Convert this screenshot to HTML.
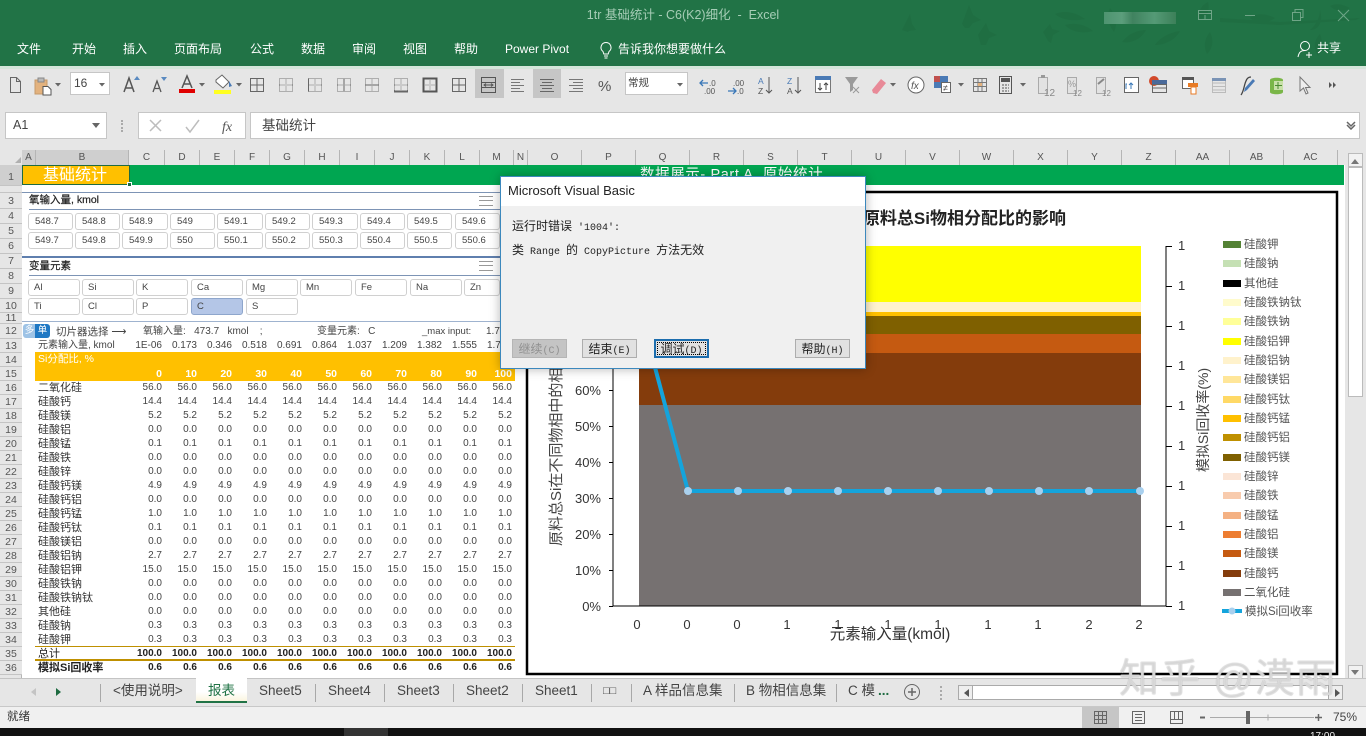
<!DOCTYPE html>
<html lang="zh"><head><meta charset="utf-8"><title>1tr 基础统计 - C6(K2)细化 - Excel</title>
<style>
*{box-sizing:border-box;margin:0;padding:0}
html,body{width:1366px;height:736px;overflow:hidden;background:#fff;font-family:"Liberation Sans","Noto Sans CJK SC",sans-serif;color:#333}
.a{position:absolute;white-space:nowrap}
.c{transform:translateX(-50%)}
.tab{position:absolute;top:41px;font-size:12px;color:#fff;line-height:16px;white-space:nowrap}
.ch{position:absolute;top:150px;height:15px;font-size:10px;line-height:15px;text-align:center;color:#555;border-right:1px solid #b5b5b5}
.rh{position:absolute;left:0;width:22px;text-align:center;font-size:10.5px;line-height:12px;color:#555;background:#e6e6e6;border-bottom:1px solid #c4c4c4}
.bt{position:absolute;background:#fff;border:1px solid #d0d0d0;border-radius:3px;font-size:9.5px;line-height:15px;padding-left:6px;color:#444;height:17px}
.bt2{padding-left:5px}
.r{position:absolute;left:38px;height:14px;line-height:14px;font-size:10px;display:flex;white-space:nowrap}
.r b{display:block;width:89px;font-weight:400;font-size:11px;color:#333}
.r i{display:block;width:35px;text-align:right;font-style:normal;color:#444}
.bold b,.bold i{font-weight:700;color:#222}
.st{position:absolute;top:682px;font-size:13.5px;line-height:18px;color:#444;white-space:nowrap}
.sp{position:absolute;top:684px;width:1px;height:18px;background:#a8a8a8}
.m{font-family:"Liberation Mono","Noto Sans CJK SC",monospace;font-size:10px;color:#222}
.m span{font-size:12px;font-family:"Noto Sans CJK SC",sans-serif}
.db{position:absolute;top:339px;height:19px;width:55px;background:#e1e1e1;border:1px solid #adadad;line-height:17px;text-align:center}
svg text{font-family:"Liberation Sans","Noto Sans CJK SC",sans-serif}
</style></head><body>

<!-- title bar -->
<div class="a" style="left:0;top:0;width:1366px;height:66px;background:#217346"></div>
<svg class="a" style="left:860px;top:0" width="506" height="66" fill="#1f6a40" opacity=".55">
<path d="M42 30l8-16 2 10 4 6-7 1-1 1z"/><path d="M102 24l7-19 4 10 8 5-8 3-4 5-4 0z"/>
<path d="M118 35l8-12 3 8 8 4-8 3-3 7-5 0z"/><path d="M183 32l7-8 2 5 8 2-7 4-2 8-3-2z"/>
<path d="M195 14c10-4 20-2 30 5-10 2-22 2-30-5zM205 25c10-3 22 0 28 6-10 3-22 1-28-6zM262 42c6-8 15-12 24-12-4 8-14 14-24 12zM295 45c4-6 12-12 25-14-4 8-14 14-25 14zM340 20c-2-8 0-14 8-18 2 8 0 14-8 18zM360 18l60 4 80-4-4 2-76 5-60-3zM390 18c6-5 15-5 25 0-8 6-18 6-25 0zM450 30c5-4 10-12 10-20 3 10 0 20-10 20zM460 34c3 8 3 16-2 22-5-8-4-16 2-22zM350 32c4 8 3 16-3 22-4-8-2-16 3-22zM250 8c6 8 8 16 4 24-6-8-8-16-4-24zM470 6c6-3 12-2 20 2-6 4-14 4-20-2z"/>
</svg>
<div class="a c" style="left:683px;top:7px;font-size:12.500px;line-height:16px;color:#a6cdb6">1tr 基础统计 - C6(K2)细化 &nbsp;-&nbsp; Excel</div>
<div class="a" style="left:1104px;top:12px;width:72px;height:12px;background:linear-gradient(90deg,#4e9470 0,#5c9e7c 25%,#40825f 40%,#559a76 70%,#3c8059 100%)"></div>
<svg class="a" style="left:1190px;top:0" width="176" height="30" fill="none" stroke="#6fa587" stroke-width="1">
<path d="M8.500 10.500h13v9h-13zM8.500 13.500h13M15 15v4"/><path d="M55 15.500h10"/>
<path d="M102.500 12.500h8v8h-8zM105 12.500v-3h8v8h-2.500"/><path d="M148 10l11 11M159 10l-11 11"/></svg>

<div class="tab" style="left:17px">文件</div><div class="tab" style="left:72px">开始</div><div class="tab" style="left:123px">插入</div><div class="tab" style="left:174px">页面布局</div><div class="tab" style="left:250px">公式</div><div class="tab" style="left:301px">数据</div><div class="tab" style="left:352px">审阅</div><div class="tab" style="left:403px">视图</div><div class="tab" style="left:454px">帮助</div><div class="tab" style="left:505px">Power Pivot</div><div class="tab" style="left:618px">告诉我你想要做什么</div>
<svg class="a" style="left:598px;top:41px" width="16" height="18" fill="none" stroke="#fff"><path d="M8 1.500a5 5 0 0 1 3 9l-.8 2.500h-4.400l-.8-2.500a5 5 0 0 1 3-9zM6 15h4M6.500 17h3"/></svg>
<svg class="a" style="left:1297px;top:40px" width="18" height="19" fill="none" stroke="#fff"><circle cx="8" cy="6" r="4.500"/><path d="M1 17c1-5 3-6.500 7-6.500M12 12v6M9 15h6"/></svg>
<div class="tab" style="left:1317px;top:40px">共享</div>

<!-- toolbar / formula area -->
<div class="a" style="left:0;top:66px;width:1366px;height:85px;background:#e6e6e6"></div>
<div class="a" style="left:0;top:66px;width:1366px;height:3px;background:#d4e6da"></div>
<div class="a" style="left:475px;top:69px;width:29px;height:29px;background:#c6c6c6"></div>
<div class="a" style="left:533px;top:69px;width:28px;height:29px;background:#c6c6c6"></div>
<div class="a" style="left:70px;top:72px;width:40px;height:23px;background:#fff;border:1px solid #c6c6c6;font-size:12px;line-height:21px;padding-left:3px;color:#444">16</div>
<div class="a" style="left:625px;top:72px;width:63px;height:23px;background:#fff;border:1px solid #c6c6c6;font-size:10.500px;line-height:21px;padding-left:2px;color:#444">常规</div>

<svg class="a" style="left:0;top:66px" width="1366" height="42" fill="none" stroke="#666">
<defs>
<g id="dg"><path d="M.500.500h13v13H.500zM7 .500v13M.500 7h13" stroke="#777" stroke-dasharray="1 1"/></g>
<path id="ar" d="M0 0h6l-3 3.500z" fill="#666" stroke="none"/>
</defs>
<path d="M10.500 11.500h6l4 4v11h-10zM16.500 11.500v4h4" stroke="#666"/>
<path d="M35 14h12v14H35z" fill="#e3b27e" stroke="#c59a6a"/><path d="M38 12h6v4h-6z" fill="#b9b9b9" stroke="#888"/><path d="M43 20.500h5l3 3v5.500h-8z" fill="#fff" stroke="#555"/>
<use href="#ar" x="55" y="17"/>
<use href="#ar" x="99" y="17"/>
<path d="M124 26l5-14 5 14M126 22h6" stroke="#555" stroke-width="1.500"/><path d="M134 14l3-4 3 4z" fill="#5a8ac0" stroke="none"/>
<path d="M153 26l4-11 4 11M155 22.500h4" stroke="#555" stroke-width="1.300"/><path d="M161 11h6l-3 4z" fill="#5a8ac0" stroke="none"/>
<path d="M182 22l5-12 5 12M184 18h6" stroke="#555" stroke-width="1.500"/><rect x="179" y="23" width="16" height="4" fill="#e00000" stroke="none"/>
<use href="#ar" x="199" y="17"/>
<path d="M216 14l6-5 7 7-6 6-7-6z" fill="#fff" stroke="#666"/><path d="M229 15l3 5-3 1z" fill="#4a7ab5" stroke="none"/><rect x="214" y="24" width="17" height="4" fill="#ffff20" stroke="none"/>
<use href="#ar" x="236" y="17"/>
<g stroke="#666"><path d="M250.500 12.500h13v13h-13zM257 12.500v13M250.500 19h13"/></g>
<use href="#dg" x="279" y="12"/><use href="#dg" x="308" y="12"/><path d="M308.500 12.500v13" stroke="#666"/>
<use href="#dg" x="337" y="12"/><path d="M344 12.500v13" stroke="#666"/>
<use href="#dg" x="365" y="12"/><path d="M365.500 19h13" stroke="#666"/>
<use href="#dg" x="394" y="12"/><path d="M394 25.500h14" stroke="#666" stroke-width="2"/>
<use href="#dg" x="423" y="12"/><path d="M423.500 12.500h13v13h-13z" stroke="#555" stroke-width="2"/>
<path d="M452.500 12.500h13v13h-13zM459 12.500v13M452.500 19h13" stroke="#666"/>
<path d="M481.500 11.500h14v15h-14zM481.500 16.500h14M481.500 21.500h14M484 19h9M491 17.500l2 1.500-2 1.500M486 17.500l-2 1.500 2 1.500" stroke="#555"/>
<path d="M511 13.500h13M511 16.500h9M511 19.500h13M511 22.500h9M511 25.500h13" stroke="#777"/>
<path d="M540 13.500h14M542 16.500h10M540 19.500h14M542 22.500h10M540 25.500h14" stroke="#666"/>
<path d="M569 13.500h14M573 16.500h10M569 19.500h14M573 22.500h10M569 25.500h14" stroke="#777"/>
<text x="598" y="25" font-size="15" fill="#555" stroke="none">%</text>
<use href="#ar" x="677" y="17"/>
<path d="M700 17h8M703 14l-3 3 3 3" stroke="#3a78b8" stroke-width="1.300"/><text x="709" y="20" font-size="8" fill="#555" stroke="none">.0</text><text x="704" y="28" font-size="8" fill="#555" stroke="none">.00</text>
<text x="733" y="20" font-size="8" fill="#555" stroke="none">.00</text><path d="M728 25h8M733 22l3 3-3 3" stroke="#3a78b8" stroke-width="1.300"/><text x="737" y="28" font-size="8" fill="#555" stroke="none">.0</text>
<text x="758" y="18" font-size="8.500" fill="#4a7ab5" stroke="none">A</text><text x="758" y="28" font-size="8.500" fill="#555" stroke="none">Z</text><path d="M769 11v16M766 24l3 3 3-3" stroke="#555"/>
<text x="787" y="18" font-size="8.500" fill="#4a7ab5" stroke="none">Z</text><text x="787" y="28" font-size="8.500" fill="#555" stroke="none">A</text><path d="M798 11v16M795 24l3 3 3-3" stroke="#555"/>
<path d="M815.500 10.500h15v16h-15z" fill="#fff" stroke="#777"/><rect x="815" y="10" width="16" height="4" fill="#4a7ab5" stroke="none"/><path d="M820 17v7M818 22l2 2 2-2M826 24v-7M824 19l2-2 2 2" stroke="#444"/>
<path d="M845 11h13l-5 7v6l-3 2v-8z" fill="#9a9a9a" stroke="none"/><path d="M853 21l6 6M859 21l-6 6" stroke="#999"/>
<path d="M872 24l9-11 5 4-9 11-4-1z" fill="#e88a98" stroke="none"/>
<use href="#ar" x="890" y="17"/>
<circle cx="916" cy="19" r="8" stroke="#666" fill="#fff"/><text x="911" y="23" font-size="10" font-style="italic" fill="#555" stroke="none">fx</text>
<rect x="934" y="10" width="14" height="12" fill="#4a7ab5" stroke="none"/><rect x="934" y="10" width="6" height="6" fill="#c0504d" stroke="none"/><path d="M941.500 16.500h9v10h-9z" fill="#fff" stroke="#666"/><text x="943" y="25" font-size="9" fill="#444" stroke="none">≠</text>
<use href="#ar" x="958" y="17"/>
<path d="M973.500 12.500h13v13h-13zM973.500 16.500h13M973.500 20.500h13M978 12.500v13M982 12.500v13" stroke="#777"/><rect x="978" y="17" width="4" height="3" fill="#e3b27e" stroke="none"/>
<path d="M999.500 10.500h12v17h-12z" stroke="#555"/><rect x="1001" y="12" width="9" height="4" fill="#555" stroke="none"/><path d="M1002 19h7M1002 22h7M1002 25h7" stroke="#555" stroke-dasharray="2 1"/>
<use href="#ar" x="1020" y="17"/>
<path d="M1038.500 11.500h9v16h-9z" fill="#e2e2e2" stroke="#aaa"/><rect x="1041" y="9" width="4" height="3" fill="#999" stroke="none"/><text x="1044" y="30" font-size="10" fill="#888" stroke="none">12</text>
<path d="M1067.500 11.500h9v16h-9z" fill="#e2e2e2" stroke="#aaa"/><text x="1068" y="21" font-size="9" fill="#999" stroke="none">%</text><text x="1073" y="30" font-size="8" fill="#888" stroke="none">12</text>
<path d="M1096.500 11.500h9v16h-9z" fill="#e2e2e2" stroke="#aaa"/><path d="M1098 18l6-5" stroke="#888" stroke-width="2"/><text x="1102" y="30" font-size="8" fill="#888" stroke="none">12</text>
<path d="M1124.500 11.500h14v15h-14z" fill="#fff" stroke="#666"/><path d="M1131 23v-6M1129 19l2-2 2 2M1127 18h-1v5" stroke="#3a78b8"/>
<circle cx="1154" cy="15" r="5" fill="#d2492a" stroke="none"/><rect x="1152" y="14" width="15" height="4" fill="#4a6a9a" stroke="none"/><path d="M1152.500 18.500h14v8h-14zM1152.500 22h14" stroke="#666"/>
<path d="M1182.500 11.500h11v11h-11z" fill="#fff" stroke="#666"/><rect x="1182" y="11" width="12" height="3" fill="#555" stroke="none"/><rect x="1188" y="17" width="10" height="4" fill="#e87b25" stroke="none"/><rect x="1191" y="21" width="5" height="7" fill="#fff" stroke="#e87b25"/>
<path d="M1212.500 12.500h13v14h-13zM1212.500 17h13M1212.500 20.500h13M1212.500 24h13" stroke="#bbb"/><rect x="1212" y="12" width="14" height="3" fill="#7a93b5" stroke="none"/>
<path d="M1241 29c3-4 3-10 5-14 1-3 3-4 5-4" stroke="#444" stroke-width="1.300"/><path d="M1245 22l8-9 2 2-8 9-3 2z" fill="#4a7ab5" stroke="none"/>
<path d="M1270 14c0-3 13-3 13 0v12c0 3-13 3-13 0z" fill="#7ab648" stroke="none"/><rect x="1274" y="15" width="9" height="9" fill="#c8e0a8" stroke="none"/><path d="M1278 16v7M1275 19.500h7" stroke="#4a8a30"/>
<path d="M1300 11v14l3.500-3 2.500 6 2-1-2.500-5.500h4.500z" fill="#eee" stroke="#777"/>
<path d="M1329 16v6l3-3zM1333 16v6l3-3z" fill="#555" stroke="none"/>
</svg>

<div class="a" style="left:5px;top:112px;width:102px;height:27px;background:#fff;border:1px solid #c6c6c6;font-size:12.5px;line-height:25px;padding-left:7px;color:#444">A1</div>
<div class="a" style="left:92px;top:123px;border:4px solid transparent;border-top:5px solid #666"></div>
<div class="a" style="left:121px;top:120px;width:2px;height:12px;border-left:2px dotted #aaa"></div>
<div class="a" style="left:138px;top:112px;width:108px;height:27px;background:#fff;border:1px solid #c6c6c6"></div>
<svg class="a" style="left:145px;top:116px" width="100" height="20" fill="none" stroke="#bdbdbd" stroke-width="1.500"><path d="M5 4l11 11M16 4l-11 11"/><path d="M41 11l4 5 9-12"/><text x="77" y="15" font-size="14" font-style="italic" fill="#555" stroke="none" style="font-family:'Liberation Serif',serif">fx</text></svg>
<div class="a" style="left:250px;top:112px;width:1110px;height:27px;background:#fff;border:1px solid #c6c6c6;font-size:13.5px;line-height:25px;padding-left:11px;color:#444">基础统计</div>
<svg class="a" style="left:1345px;top:120px" width="12" height="10" fill="none" stroke="#666" stroke-width="1.500"><path d="M2 2l4 4 4-4M2 5l4 4 4-4"/></svg>

<!-- column headers -->
<div class="a" style="left:0;top:150px;width:1366px;height:15px;background:#e6e6e6"></div>
<div class="a" style="left:22px;top:150px;width:107px;height:15px;background:#cfcfcf"></div>
<div class="a" style="left:15px;top:157px;border:3px solid transparent;border-right-color:#b0b0b0;border-bottom-color:#b0b0b0"></div>
<div class="ch" style="left:22px;width:14px">A</div><div class="ch" style="left:36px;width:93px">B</div><div class="ch" style="left:129px;width:36px">C</div><div class="ch" style="left:165px;width:35px">D</div><div class="ch" style="left:200px;width:35px">E</div><div class="ch" style="left:235px;width:35px">F</div><div class="ch" style="left:270px;width:35px">G</div><div class="ch" style="left:305px;width:35px">H</div><div class="ch" style="left:340px;width:35px">I</div><div class="ch" style="left:375px;width:35px">J</div><div class="ch" style="left:410px;width:35px">K</div><div class="ch" style="left:445px;width:35px">L</div><div class="ch" style="left:480px;width:34px">M</div><div class="ch" style="left:514px;width:14px">N</div><div class="ch" style="left:528px;width:54px">O</div><div class="ch" style="left:582px;width:54px">P</div><div class="ch" style="left:636px;width:54px">Q</div><div class="ch" style="left:690px;width:54px">R</div><div class="ch" style="left:744px;width:54px">S</div><div class="ch" style="left:798px;width:54px">T</div><div class="ch" style="left:852px;width:54px">U</div><div class="ch" style="left:906px;width:54px">V</div><div class="ch" style="left:960px;width:54px">W</div><div class="ch" style="left:1014px;width:54px">X</div><div class="ch" style="left:1068px;width:54px">Y</div><div class="ch" style="left:1122px;width:54px">Z</div><div class="ch" style="left:1176px;width:54px">AA</div><div class="ch" style="left:1230px;width:54px">AB</div><div class="ch" style="left:1284px;width:54px">AC</div>

<!-- row headers -->
<div class="a" style="left:0;top:165px;width:22px;height:515px;background:#e6e6e6;border-right:1px solid #b5b5b5"></div>
<div class="rh" style="top:165px;height:21px;line-height:24px;background:#cfcfcf">1</div>
<div class="rh" style="top:186px;height:7px"></div>
<div class="rh" style="top:193px;height:16px;line-height:16px">3</div><div class="rh" style="top:209px;height:15px;line-height:15px">4</div><div class="rh" style="top:224px;height:15px;line-height:15px">5</div><div class="rh" style="top:239px;height:15px;line-height:15px">6</div><div class="rh" style="top:254px;height:15px;line-height:15px">7</div><div class="rh" style="top:269px;height:15px;line-height:15px">8</div><div class="rh" style="top:284px;height:15px;line-height:15px">9</div><div class="rh" style="top:299px;height:14px;line-height:14px">10</div><div class="rh" style="top:313px;height:11px;line-height:11px">11</div><div class="rh" style="top:324px;height:15px;line-height:15px">12</div><div class="rh" style="top:339px;height:14px;line-height:14px">13</div>
<div class="rh" style="top:353px;height:14px;line-height:14px">14</div><div class="rh" style="top:367px;height:14px;line-height:14px">15</div><div class="rh" style="top:381px;height:14px;line-height:14px">16</div><div class="rh" style="top:395px;height:14px;line-height:14px">17</div><div class="rh" style="top:409px;height:14px;line-height:14px">18</div><div class="rh" style="top:423px;height:14px;line-height:14px">19</div><div class="rh" style="top:437px;height:14px;line-height:14px">20</div><div class="rh" style="top:451px;height:14px;line-height:14px">21</div><div class="rh" style="top:465px;height:14px;line-height:14px">22</div><div class="rh" style="top:479px;height:14px;line-height:14px">23</div><div class="rh" style="top:493px;height:14px;line-height:14px">24</div><div class="rh" style="top:507px;height:14px;line-height:14px">25</div><div class="rh" style="top:521px;height:14px;line-height:14px">26</div><div class="rh" style="top:535px;height:14px;line-height:14px">27</div><div class="rh" style="top:549px;height:14px;line-height:14px">28</div><div class="rh" style="top:563px;height:14px;line-height:14px">29</div><div class="rh" style="top:577px;height:14px;line-height:14px">30</div><div class="rh" style="top:591px;height:14px;line-height:14px">31</div><div class="rh" style="top:605px;height:14px;line-height:14px">32</div><div class="rh" style="top:619px;height:14px;line-height:14px">33</div><div class="rh" style="top:633px;height:14px;line-height:14px">34</div><div class="rh" style="top:647px;height:14px;line-height:14px">35</div><div class="rh" style="top:661px;height:14px;line-height:14px">36</div>

<!-- row 1 -->
<div class="a" style="left:129px;top:165px;width:1215px;height:20px;background:#00a651"></div>
<div class="a" style="left:640px;top:166px;height:18px;font-size:14.500px;line-height:18px;color:#fff;letter-spacing:.6px">数据展示- Part A. 原始统计</div>
<div class="a" style="left:22px;top:165px;width:108px;height:20px;background:#ffc000;border:1.500px solid #1e6b41;color:#fff;font-size:16px;line-height:20px;padding-left:20px">基础统计</div>
<div class="a" style="left:127px;top:182px;width:5px;height:5px;background:#1e6b41;border:1px solid #fff"></div>

<!-- slicer 1 -->
<div class="a" style="left:22px;top:192px;width:478px;height:1px;background:#7d94b5"></div>
<div class="a" style="left:29px;top:192px;font-size:10.500px;line-height:17px;color:#222;-webkit-text-stroke:.2px #222">氧输入量, kmol</div>
<div class="a" style="left:29px;top:209px;width:471px;height:1px;background:#7d94b5"></div>
<div class="a" style="left:479px;top:196px;width:14px;height:10px;border-top:1px solid #999;border-bottom:1px solid #999"></div><div class="a" style="left:479px;top:200px;width:14px;height:2px;border-top:1px solid #999"></div>
<div class="bt" style="left:28px;top:213px;width:45px">548.7</div><div class="bt" style="left:75px;top:213px;width:45px">548.8</div><div class="bt" style="left:122px;top:213px;width:46px">548.9</div><div class="bt" style="left:170px;top:213px;width:45px">549</div><div class="bt" style="left:217px;top:213px;width:46px">549.1</div><div class="bt" style="left:265px;top:213px;width:45px">549.2</div><div class="bt" style="left:312px;top:213px;width:46px">549.3</div><div class="bt" style="left:360px;top:213px;width:45px">549.4</div><div class="bt" style="left:407px;top:213px;width:45px">549.5</div><div class="bt" style="left:455px;top:213px;width:45px">549.6</div>
<div class="bt" style="left:28px;top:232px;width:45px">549.7</div><div class="bt" style="left:75px;top:232px;width:45px">549.8</div><div class="bt" style="left:122px;top:232px;width:46px">549.9</div><div class="bt" style="left:170px;top:232px;width:45px">550</div><div class="bt" style="left:217px;top:232px;width:46px">550.1</div><div class="bt" style="left:265px;top:232px;width:45px">550.2</div><div class="bt" style="left:312px;top:232px;width:46px">550.3</div><div class="bt" style="left:360px;top:232px;width:45px">550.4</div><div class="bt" style="left:407px;top:232px;width:45px">550.5</div><div class="bt" style="left:455px;top:232px;width:45px">550.6</div>

<!-- slicer 2 -->
<div class="a" style="left:22px;top:256px;width:478px;height:2px;background:#5f7fae"></div>
<div class="a" style="left:29px;top:258px;font-size:10.500px;line-height:17px;color:#222;-webkit-text-stroke:.2px #222">变量元素</div>
<div class="a" style="left:29px;top:275px;width:471px;height:1px;background:#7d94b5"></div>
<div class="a" style="left:479px;top:261px;width:14px;height:10px;border-top:1px solid #999;border-bottom:1px solid #999"></div><div class="a" style="left:479px;top:265px;width:14px;height:2px;border-top:1px solid #999"></div>
<div class="bt bt2" style="left:28px;top:279px;width:52px">Al</div><div class="bt bt2" style="left:82px;top:279px;width:52px">Si</div><div class="bt bt2" style="left:136px;top:279px;width:52px">K</div><div class="bt bt2" style="left:191px;top:279px;width:52px">Ca</div><div class="bt bt2" style="left:246px;top:279px;width:52px">Mg</div><div class="bt bt2" style="left:300px;top:279px;width:52px">Mn</div><div class="bt bt2" style="left:355px;top:279px;width:52px">Fe</div><div class="bt bt2" style="left:410px;top:279px;width:52px">Na</div><div class="bt bt2" style="left:464px;top:279px;width:36px">Zn</div>
<div class="bt bt2" style="left:28px;top:298px;width:52px">Ti</div><div class="bt bt2" style="left:82px;top:298px;width:52px">Cl</div><div class="bt bt2" style="left:136px;top:298px;width:52px">P</div><div class="bt bt2" style="left:191px;top:298px;width:52px;background:#b4c6e7;border-color:#8ea6cc">C</div><div class="bt bt2" style="left:246px;top:298px;width:52px">S</div>
<div class="a" style="left:22px;top:321px;width:478px;height:1px;background:#9fb3cf"></div>

<!-- row 12-13 -->
<div class="a" style="left:23px;top:324px;width:13px;height:14px;background:#9ec3e6;color:#fff;font-size:9.500px;line-height:14px;text-align:center;border-radius:3px 0 0 3px">多</div>
<div class="a" style="left:35px;top:324px;width:15px;height:14px;background:#1f78c4;color:#fff;font-size:9.500px;line-height:14px;text-align:center;border-radius:0 3px 3px 0">单</div>
<div class="a" style="left:56px;top:325px;font-size:10.500px;line-height:14px;color:#444">切片器选择 ⟶</div>
<div class="a" style="left:143px;top:325px;font-size:10px;line-height:14px;color:#444">氧输入量: &nbsp;&nbsp;473.7 &nbsp;&nbsp;kmol &nbsp;&nbsp;&nbsp;;</div>
<div class="a" style="left:317px;top:325px;font-size:10px;line-height:14px;color:#444">变量元素: &nbsp;&nbsp;C</div>
<div class="a" style="left:422px;top:325px;font-size:9.500px;line-height:14px;color:#444">_max input:</div>
<div class="a" style="left:486px;top:325px;font-size:10px;line-height:14px;color:#444">1.727</div>
<div class="a" style="left:38px;top:339px;font-size:10px;line-height:14px;color:#444">元素输入量, kmol</div>
<div class="r" style="left:127px;top:339px"><i>1E-06</i><i>0.173</i><i>0.346</i><i>0.518</i><i>0.691</i><i>0.864</i><i>1.037</i><i>1.209</i><i>1.382</i><i>1.555</i><i>1.727</i></div>

<!-- table -->
<div class="a" style="left:35px;top:352px;width:480px;height:29px;background:#ffc000"></div>
<div class="a" style="left:38px;top:352px;font-size:10.500px;line-height:15px;color:#fff">Si分配比, %</div>
<div class="r" style="left:127px;top:367px;font-weight:700;font-size:10.500px"><i style="color:#fff">0</i><i style="color:#fff">10</i><i style="color:#fff">20</i><i style="color:#fff">30</i><i style="color:#fff">40</i><i style="color:#fff">50</i><i style="color:#fff">60</i><i style="color:#fff">70</i><i style="color:#fff">80</i><i style="color:#fff">90</i><i style="color:#fff">100</i></div>

<div class="r" style="top:381px"><b>二氧化硅</b><i>56.0</i><i>56.0</i><i>56.0</i><i>56.0</i><i>56.0</i><i>56.0</i><i>56.0</i><i>56.0</i><i>56.0</i><i>56.0</i><i>56.0</i></div>
<div class="r" style="top:395px"><b>硅酸钙</b><i>14.4</i><i>14.4</i><i>14.4</i><i>14.4</i><i>14.4</i><i>14.4</i><i>14.4</i><i>14.4</i><i>14.4</i><i>14.4</i><i>14.4</i></div>
<div class="r" style="top:409px"><b>硅酸镁</b><i>5.2</i><i>5.2</i><i>5.2</i><i>5.2</i><i>5.2</i><i>5.2</i><i>5.2</i><i>5.2</i><i>5.2</i><i>5.2</i><i>5.2</i></div>
<div class="r" style="top:423px"><b>硅酸铝</b><i>0.0</i><i>0.0</i><i>0.0</i><i>0.0</i><i>0.0</i><i>0.0</i><i>0.0</i><i>0.0</i><i>0.0</i><i>0.0</i><i>0.0</i></div>
<div class="r" style="top:437px"><b>硅酸锰</b><i>0.1</i><i>0.1</i><i>0.1</i><i>0.1</i><i>0.1</i><i>0.1</i><i>0.1</i><i>0.1</i><i>0.1</i><i>0.1</i><i>0.1</i></div>
<div class="r" style="top:451px"><b>硅酸铁</b><i>0.0</i><i>0.0</i><i>0.0</i><i>0.0</i><i>0.0</i><i>0.0</i><i>0.0</i><i>0.0</i><i>0.0</i><i>0.0</i><i>0.0</i></div>
<div class="r" style="top:465px"><b>硅酸锌</b><i>0.0</i><i>0.0</i><i>0.0</i><i>0.0</i><i>0.0</i><i>0.0</i><i>0.0</i><i>0.0</i><i>0.0</i><i>0.0</i><i>0.0</i></div>
<div class="r" style="top:479px"><b>硅酸钙镁</b><i>4.9</i><i>4.9</i><i>4.9</i><i>4.9</i><i>4.9</i><i>4.9</i><i>4.9</i><i>4.9</i><i>4.9</i><i>4.9</i><i>4.9</i></div>
<div class="r" style="top:493px"><b>硅酸钙铝</b><i>0.0</i><i>0.0</i><i>0.0</i><i>0.0</i><i>0.0</i><i>0.0</i><i>0.0</i><i>0.0</i><i>0.0</i><i>0.0</i><i>0.0</i></div>
<div class="r" style="top:507px"><b>硅酸钙锰</b><i>1.0</i><i>1.0</i><i>1.0</i><i>1.0</i><i>1.0</i><i>1.0</i><i>1.0</i><i>1.0</i><i>1.0</i><i>1.0</i><i>1.0</i></div>
<div class="r" style="top:521px"><b>硅酸钙钛</b><i>0.1</i><i>0.1</i><i>0.1</i><i>0.1</i><i>0.1</i><i>0.1</i><i>0.1</i><i>0.1</i><i>0.1</i><i>0.1</i><i>0.1</i></div>
<div class="r" style="top:535px"><b>硅酸镁铝</b><i>0.0</i><i>0.0</i><i>0.0</i><i>0.0</i><i>0.0</i><i>0.0</i><i>0.0</i><i>0.0</i><i>0.0</i><i>0.0</i><i>0.0</i></div>
<div class="r" style="top:549px"><b>硅酸铝钠</b><i>2.7</i><i>2.7</i><i>2.7</i><i>2.7</i><i>2.7</i><i>2.7</i><i>2.7</i><i>2.7</i><i>2.7</i><i>2.7</i><i>2.7</i></div>
<div class="r" style="top:563px"><b>硅酸铝钾</b><i>15.0</i><i>15.0</i><i>15.0</i><i>15.0</i><i>15.0</i><i>15.0</i><i>15.0</i><i>15.0</i><i>15.0</i><i>15.0</i><i>15.0</i></div>
<div class="r" style="top:577px"><b>硅酸铁钠</b><i>0.0</i><i>0.0</i><i>0.0</i><i>0.0</i><i>0.0</i><i>0.0</i><i>0.0</i><i>0.0</i><i>0.0</i><i>0.0</i><i>0.0</i></div>
<div class="r" style="top:591px"><b>硅酸铁钠钛</b><i>0.0</i><i>0.0</i><i>0.0</i><i>0.0</i><i>0.0</i><i>0.0</i><i>0.0</i><i>0.0</i><i>0.0</i><i>0.0</i><i>0.0</i></div>
<div class="r" style="top:605px"><b>其他硅</b><i>0.0</i><i>0.0</i><i>0.0</i><i>0.0</i><i>0.0</i><i>0.0</i><i>0.0</i><i>0.0</i><i>0.0</i><i>0.0</i><i>0.0</i></div>
<div class="r" style="top:619px"><b>硅酸钠</b><i>0.3</i><i>0.3</i><i>0.3</i><i>0.3</i><i>0.3</i><i>0.3</i><i>0.3</i><i>0.3</i><i>0.3</i><i>0.3</i><i>0.3</i></div>
<div class="r" style="top:633px"><b>硅酸钾</b><i>0.3</i><i>0.3</i><i>0.3</i><i>0.3</i><i>0.3</i><i>0.3</i><i>0.3</i><i>0.3</i><i>0.3</i><i>0.3</i><i>0.3</i></div>
<div class="a" style="left:35px;top:646px;width:480px;height:1px;background:#bf9000"></div>
<div class="r" style="top:647px"><b style="color:#222">总计</b><i style="color:#222;font-weight:700">100.0</i><i style="color:#222;font-weight:700">100.0</i><i style="color:#222;font-weight:700">100.0</i><i style="color:#222;font-weight:700">100.0</i><i style="color:#222;font-weight:700">100.0</i><i style="color:#222;font-weight:700">100.0</i><i style="color:#222;font-weight:700">100.0</i><i style="color:#222;font-weight:700">100.0</i><i style="color:#222;font-weight:700">100.0</i><i style="color:#222;font-weight:700">100.0</i><i style="color:#222;font-weight:700">100.0</i></div>
<div class="a" style="left:35px;top:659px;width:480px;height:2px;background:#bf9000"></div>
<div class="r bold" style="top:661px"><b>模拟Si回收率</b><i>0.6</i><i>0.6</i><i>0.6</i><i>0.6</i><i>0.6</i><i>0.6</i><i>0.6</i><i>0.6</i><i>0.6</i><i>0.6</i><i>0.6</i></div>

<!-- chart -->
<svg class="a" style="left:0;top:0" width="1366" height="736" fill="none">
<rect x="527" y="192" width="810" height="482" fill="#fff" stroke="#000" stroke-width="2.500"/>
<text x="1066" y="224" text-anchor="end" font-size="17" font-weight="700" fill="#222">原料总Si物相分配比的影响</text>
<rect x="639" y="246" width="502" height="56" fill="#ffff00"/>
<rect x="639" y="302" width="502" height="10" fill="#fff2cc"/>
<rect x="639" y="312" width="502" height="4" fill="#ffc000"/>
<rect x="639" y="316" width="502" height="18" fill="#7f6000"/>
<rect x="639" y="334" width="502" height="19" fill="#c55a11"/>
<rect x="639" y="353" width="502" height="52" fill="#843c0c"/>
<rect x="639" y="405" width="502" height="201" fill="#767171"/>
<path d="M613 360v246h553M1166 246v360" stroke="#000"/>
<path d="M609 606.500h4M609 570.500h4M609 534.500h4M609 498.500h4M609 462.500h4M609 426.500h4M609 390.500h4" stroke="#000"/>
<path d="M1166 246.500h6M1166 286.500h6M1166 326.500h6M1166 366.500h6M1166 406.500h6M1166 446.500h6M1166 486.500h6M1166 526.500h6M1166 566.500h6M1166 606.500h6" stroke="#000"/>
<g font-size="13" fill="#333" text-anchor="end"><text x="601" y="611">0%</text><text x="601" y="575">10%</text><text x="601" y="539">20%</text><text x="601" y="503">30%</text><text x="601" y="467">40%</text><text x="601" y="431">50%</text><text x="601" y="395">60%</text></g>
<g font-size="13" fill="#333"><text x="1178" y="250">1</text><text x="1178" y="290">1</text><text x="1178" y="330">1</text><text x="1178" y="370">1</text><text x="1178" y="410">1</text><text x="1178" y="450">1</text><text x="1178" y="490">1</text><text x="1178" y="530">1</text><text x="1178" y="570">1</text><text x="1178" y="610">1</text></g>
<g font-size="13" fill="#333" text-anchor="middle"><text x="637" y="629">0</text><text x="687" y="629">0</text><text x="737" y="629">0</text><text x="787" y="629">1</text><text x="838" y="629">1</text><text x="888" y="629">1</text><text x="938" y="629">1</text><text x="988" y="629">1</text><text x="1038" y="629">1</text><text x="1089" y="629">2</text><text x="1139" y="629">2</text></g>
<text x="890" y="639" font-size="15.500" fill="#333" text-anchor="middle">元素输入量(kmol)</text>
<text transform="translate(561 546) rotate(-90)" font-size="15" fill="#444">原料总Si在不同物相中的相对含量(%)</text>
<text transform="translate(1208 420) rotate(-90)" font-size="14" fill="#444" text-anchor="middle">模拟Si回收率(%)</text>
<path d="M637 300L688 491H1140" stroke="#14a4dc" stroke-width="4"/>
<g fill="#a9d0ee"><circle cx="688" cy="491" r="4"/><circle cx="738" cy="491" r="4"/><circle cx="788" cy="491" r="4"/><circle cx="838" cy="491" r="4"/><circle cx="888" cy="491" r="4"/><circle cx="938" cy="491" r="4"/><circle cx="989" cy="491" r="4"/><circle cx="1039" cy="491" r="4"/><circle cx="1089" cy="491" r="4"/><circle cx="1140" cy="491" r="4"/></g>
<g stroke="none">
<rect x="1223" y="241" width="18" height="7" fill="#548235"/><rect x="1223" y="260" width="18" height="7" fill="#c5e0b4"/><rect x="1223" y="280" width="18" height="7" fill="#000"/><rect x="1223" y="299" width="18" height="7" fill="#fffbcc"/><rect x="1223" y="318" width="18" height="7" fill="#ffff99"/><rect x="1223" y="338" width="18" height="7" fill="#ffff00"/><rect x="1223" y="357" width="18" height="7" fill="#fff2cc"/><rect x="1223" y="376" width="18" height="7" fill="#ffe699"/><rect x="1223" y="396" width="18" height="7" fill="#ffd966"/><rect x="1223" y="415" width="18" height="7" fill="#ffc000"/><rect x="1223" y="434" width="18" height="7" fill="#bf9000"/><rect x="1223" y="454" width="18" height="7" fill="#7f6000"/><rect x="1223" y="473" width="18" height="7" fill="#fbe5d6"/><rect x="1223" y="492" width="18" height="7" fill="#f8cbad"/><rect x="1223" y="512" width="18" height="7" fill="#f4b183"/><rect x="1223" y="531" width="18" height="7" fill="#ed7d31"/><rect x="1223" y="550" width="18" height="7" fill="#c55a11"/><rect x="1223" y="570" width="18" height="7" fill="#843c0c"/><rect x="1223" y="589" width="18" height="7" fill="#767171"/>
</g>
<path d="M1222 611h20" stroke="#14a4dc" stroke-width="4"/><circle cx="1232" cy="611" r="3.500" fill="#a9d0ee"/>
<g font-size="11.500" fill="#555"><text x="1244" y="248">硅酸钾</text><text x="1244" y="267">硅酸钠</text><text x="1244" y="287">其他硅</text><text x="1244" y="306">硅酸铁钠钛</text><text x="1244" y="325">硅酸铁钠</text><text x="1244" y="345">硅酸铝钾</text><text x="1244" y="364">硅酸铝钠</text><text x="1244" y="383">硅酸镁铝</text><text x="1244" y="403">硅酸钙钛</text><text x="1244" y="422">硅酸钙锰</text><text x="1244" y="441">硅酸钙铝</text><text x="1244" y="461">硅酸钙镁</text><text x="1244" y="480">硅酸锌</text><text x="1244" y="499">硅酸铁</text><text x="1244" y="519">硅酸锰</text><text x="1244" y="538">硅酸铝</text><text x="1244" y="557">硅酸镁</text><text x="1244" y="577">硅酸钙</text><text x="1244" y="596">二氧化硅</text><text x="1245" y="615">模拟Si回收率</text></g>
</svg>

<!-- right scrollbar -->
<div class="a" style="left:1345px;top:150px;width:21px;height:530px;background:#e6e6e6"></div>
<div class="a" style="left:1348px;top:153px;width:15px;height:14px;background:#f2f2f2;border:1px solid #bbb"></div>
<div class="a" style="left:1351px;top:155px;border:4px solid transparent;border-bottom:5px solid #777"></div>
<div class="a" style="left:1348px;top:167px;width:15px;height:230px;background:#fff;border:1px solid #bbb"></div>
<div class="a" style="left:1348px;top:665px;width:15px;height:14px;background:#f2f2f2;border:1px solid #bbb"></div>
<div class="a" style="left:1351px;top:670px;border:4px solid transparent;border-top:5px solid #777"></div>

<!-- sheet tabs -->
<div class="a" style="left:0;top:678px;width:1366px;height:29px;background:#e6e6e6;border-top:1px solid #c4c4c4;border-bottom:1px solid #c8c8c8"></div>
<div class="a" style="left:27px;top:688px;border:4px solid transparent;border-right:5px solid #c4c4c4"></div>
<div class="a" style="left:56px;top:688px;border:4px solid transparent;border-left:5px solid #1e6b41"></div>
<div class="sp" style="left:100px"></div><div class="sp" style="left:315px"></div><div class="sp" style="left:384px"></div><div class="sp" style="left:453px"></div><div class="sp" style="left:522px"></div><div class="sp" style="left:591px"></div><div class="sp" style="left:631px"></div><div class="sp" style="left:734px"></div><div class="sp" style="left:836px"></div>
<div class="a" style="left:196px;top:678px;width:51px;height:25px;background:linear-gradient(#fff 60%,#fbf5df);border-bottom:2px solid #217346"></div>
<div class="st" style="left:113px">&lt;使用说明&gt;</div>
<div class="st" style="left:208px;color:#217346">报表</div>
<div class="st" style="left:259px">Sheet5</div><div class="st" style="left:328px">Sheet4</div><div class="st" style="left:397px">Sheet3</div><div class="st" style="left:466px">Sheet2</div><div class="st" style="left:535px">Sheet1</div>
<div class="st" style="left:603px;font-size:11px">□□</div>
<div class="st" style="left:643px">A 样品信息集</div><div class="st" style="left:746px">B 物相信息集</div><div class="st" style="left:848px">C 模</div>
<div class="st" style="left:878px;color:#1e6b41;font-weight:700">...</div>
<svg class="a" style="left:903px;top:683px" width="18" height="18" fill="none" stroke="#666"><circle cx="9" cy="9" r="7.500"/><path d="M9 5v8M5 9h8" stroke-width="1.500"/></svg>
<div class="a" style="left:940px;top:686px;width:2px;height:14px;border-left:2px dotted #aaa"></div>
<div class="a" style="left:958px;top:685px;width:385px;height:15px;background:#fff;border:1px solid #aaa"></div>
<div class="a" style="left:958px;top:685px;width:15px;height:15px;background:#eee;border:1px solid #aaa"></div>
<div class="a" style="left:1328px;top:685px;width:15px;height:15px;background:#eee;border:1px solid #aaa"></div>
<div class="a" style="left:960px;top:689px;border:4px solid transparent;border-right:5px solid #555"></div>
<div class="a" style="left:1335px;top:689px;border:4px solid transparent;border-left:5px solid #555"></div>

<!-- status bar -->
<div class="a" style="left:0;top:707px;width:1366px;height:21px;background:#f0f0f0"></div>
<div class="a" style="left:7px;top:708px;font-size:11.500px;line-height:18px;color:#333">就绪</div>
<div class="a" style="left:1082px;top:707px;width:37px;height:21px;background:#c6c6c6"></div>
<svg class="a" style="left:1082px;top:707px" width="284" height="21" fill="none" stroke="#666">
<path d="M12.500 4.500h12v12h-12zM16.500 4.500v12M20.500 4.500v12M12.500 8.500h12M12.500 12.500h12"/>
<path d="M50.500 4.500h12v12h-12zM53 7.500h7M53 10.500h7M53 13.500h7"/>
<path d="M88.500 4.500h12v12h-12zM92.500 4.500v8h4v-8M88.500 12.500h12"/>
<path d="M118 10.500h5" stroke-width="2"/><path d="M128 10.500h104" stroke="#aaa"/><rect x="164" y="4" width="4" height="13" fill="#666" stroke="none"/><path d="M186 7.500v6" stroke="#aaa"/><path d="M233 10.500h7M236.500 7v7" stroke-width="1.500"/>
</svg>
<div class="a" style="left:1333px;top:709px;font-size:12px;line-height:16px;color:#444">75%</div>

<!-- taskbar -->
<div class="a" style="left:0;top:728px;width:1366px;height:8px;background:#111"></div>
<div class="a" style="left:344px;top:728px;width:44px;height:8px;background:#333"></div>
<div class="a" style="left:1310px;top:731px;font-size:10px;line-height:12px;color:#eee;height:5px;overflow:hidden">17:00</div>

<!-- watermark -->
<div class="a" style="left:1119px;top:655px;font-size:40px;line-height:48px;letter-spacing:1px;color:rgba(255,255,255,.6);text-shadow:0 0 1px #999;font-family:'Liberation Sans','Noto Sans CJK SC',sans-serif">知乎 @漠雨</div>

<!-- dialog -->
<div class="a" style="left:500px;top:176px;width:366px;height:193px;background:#f0f0f0;border:1px solid #3c88bd;box-shadow:0 0 10px rgba(0,0,0,.3)"></div>
<div class="a" style="left:501px;top:177px;width:364px;height:29px;background:#fff"></div>
<div class="a" style="left:508px;top:182px;font-size:13px;line-height:17px;color:#222">Microsoft Visual Basic</div>
<div class="a m" style="left:512px;top:218px;line-height:16px"><span>运行时错误</span> '1004':</div>
<div class="a m" style="left:512px;top:242px;line-height:16px"><span>类</span> Range <span>的</span> CopyPicture <span>方法无效</span></div>
<div class="db m" style="left:512px;background:#c4c4c4;color:#8f8f8f;border-color:#b5b5b5"><span>继续</span>(C)</div>
<div class="db m" style="left:582px"><span>结束</span>(E)</div>
<div class="db m" style="left:654px;border:2px solid #1c6dae;line-height:15px;outline:1px dotted #000;outline-offset:-4px"><span>调试</span>(D)</div>
<div class="db m" style="left:795px"><span>帮助</span>(H)</div>
</body></html>
